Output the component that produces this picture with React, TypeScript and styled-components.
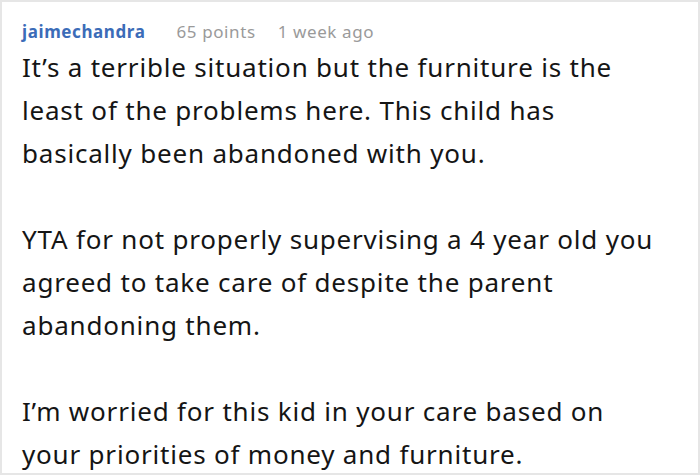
import styled, { createGlobalStyle } from "styled-components";

const GlobalStyle = createGlobalStyle`
  html, body {
    margin: 0;
    padding: 0;
    background: #ffffff;
  }
  body {
    font-family: "Noto Sans", "Open Sans", sans-serif;
  }
`;

const paragraphs = [
  "It’s a terrible situation but the furniture is the least of the problems here. This child has basically been abandoned with you.",
  "YTA for not properly supervising a 4 year old you agreed to take care of despite the parent abandoning them.",
  "I’m worried for this kid in your care based on your priorities of money and furniture.",
];

const App = () => {
  return (
    <>
      <GlobalStyle />
      <Card>
        <Header>
          <Author href="#">jaimechandra</Author>
          <Meta>65 points</Meta>
          <Meta>1 week ago</Meta>
        </Header>
        <Body>
          {paragraphs.map((text, i) => (
            <Paragraph key={i}>{text}</Paragraph>
          ))}
        </Body>
      </Card>
    </>
  );
};

export default App;

const Card = styled.div`
  box-sizing: border-box;
  width: 700px;
  height: 475px;
  border: 2px solid #e6e6e6;
  padding: 16px 20px 0 20px;
  overflow: hidden;
`;

const Header = styled.div`
  display: flex;
  align-items: baseline;
  column-gap: 22px;
  font-size: 17px;
  line-height: 28px;
  letter-spacing: 0.6px;
`;

const Author = styled.a`
  color: #3b6cb8;
  font-weight: 700;
  text-decoration: none;
  margin-right: 9px;
`;

const Meta = styled.span`
  color: #9a9a9a;
`;

const Body = styled.div`
  display: flex;
  flex-direction: column;
  row-gap: 43px;
  padding-right: 12px;
`;

const Paragraph = styled.p`
  margin: 0;
  font-size: 26px;
  line-height: 43px;
  letter-spacing: 0.8px;
  color: #151515;
`;
